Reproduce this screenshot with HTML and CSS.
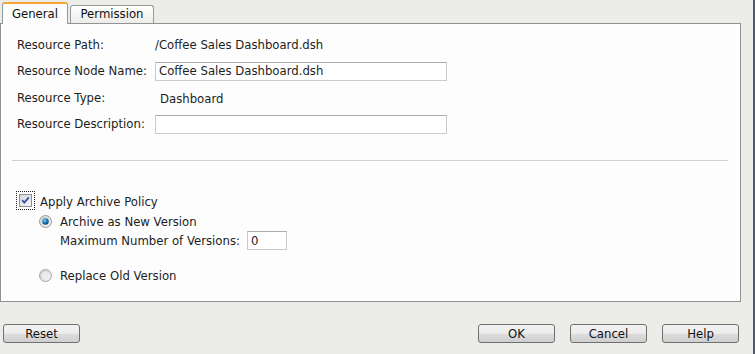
FILE: index.html
```html
<!DOCTYPE html>
<html lang="en">
<head>
    <meta charset="UTF-8">
    <title>Resource Properties</title>
    <link rel="stylesheet" href="styles.css">
</head>
<body>
    <!-- dialog body -->
    <div class="dialog">
        <div class="tabs">
            <div class="tab active">General</div>
            <div class="tab">Permission</div>
        </div>

        <div class="panel">
            <!-- resource info -->
            <div class="form">
                <span class="label">Resource Path:</span>
                <span class="value">/Coffee Sales Dashboard.dsh</span>

                <span class="label">Resource Node Name:</span>
                <input type="text" class="field" value="Coffee Sales Dashboard.dsh">

                <span class="label">Resource Type:</span>
                <span class="value type">Dashboard</span>

                <span class="label">Resource Description:</span>
                <input type="text" class="field" value="">
            </div>

            <div class="divider"></div>

            <!-- archive policy -->
            <div class="archive">
                <div class="check-row">
                    <span class="focus">
                        <svg width="13" height="13" viewBox="0 0 13 13">
                            <defs>
                                <linearGradient id="cb" x1="0" y1="0" x2="1" y2="1">
                                    <stop offset="0" stop-color="#d8d8d4"/>
                                    <stop offset="1" stop-color="#f4f4f2"/>
                                </linearGradient>
                            </defs>
                            <rect x="0.5" y="0.5" width="12" height="12" fill="url(#cb)" stroke="#8e9096"/>
                            <path d="M3.2 6.2 L5.3 8.6 L9.8 3.4" fill="none" stroke="#3650b8" stroke-width="1.8"/>
                        </svg>
                    </span>
                    <span class="check-text">Apply Archive Policy</span>
                </div>

                <div class="options">
                    <div class="radio-row">
                        <svg width="13" height="13" viewBox="0 0 13 13">
                            <defs>
                                <radialGradient id="rOn" cx="0.4" cy="0.35" r="0.6">
                                    <stop offset="0" stop-color="#8fd4f4"/>
                                    <stop offset="0.6" stop-color="#1a78b8"/>
                                    <stop offset="1" stop-color="#0c4a7c"/>
                                </radialGradient>
                                <linearGradient id="rBg" x1="0" y1="0" x2="1" y2="1">
                                    <stop offset="0" stop-color="#cfcfcf"/>
                                    <stop offset="1" stop-color="#f8f8f8"/>
                                </linearGradient>
                            </defs>
                            <circle cx="6.5" cy="6.5" r="6" fill="url(#rBg)" stroke="#9a9a9a"/>
                            <circle cx="6.5" cy="6.5" r="3.2" fill="url(#rOn)"/>
                        </svg>
                        <span>Archive as New Version</span>
                    </div>
                    <div class="sub-row">
                        <span>Maximum Number of Versions:</span>
                        <input type="text" class="small" value="0">
                    </div>
                    <div class="radio-row last">
                        <svg width="13" height="13" viewBox="0 0 13 13">
                            <defs>
                                <linearGradient id="rOff" x1="0" y1="0" x2="1" y2="1">
                                    <stop offset="0" stop-color="#c8c8c8"/>
                                    <stop offset="1" stop-color="#fafafa"/>
                                </linearGradient>
                            </defs>
                            <circle cx="6.5" cy="6.5" r="6" fill="url(#rOff)" stroke="#a4a4a4"/>
                            <circle cx="6.5" cy="6.5" r="3.6" fill="#ececec"/>
                        </svg>
                        <span>Replace Old Version</span>
                    </div>
                </div>
            </div>
        </div>

        <!-- bottom buttons -->
        <div class="footer">
            <button class="btn">Reset</button>
            <span class="spacer"></span>
            <button class="btn">OK</button>
            <button class="btn">Cancel</button>
            <button class="btn">Help</button>
        </div>
    </div>
</body>
</html>
```

FILE: styles.css
```css
/* page */
body {
    margin: 0;
    background-color: #ecece9;
    font-family: "DejaVu Sans", Verdana, sans-serif;
    font-size: 11.7px;
    color: #1e1e1e;
}

/* dialog frame, dark edge on the right */
.dialog {
    width: 753px;
    height: 354px;
    border-right: 2px solid #4d5b70;
    display: flex;
    flex-direction: column;
}

/* tab strip */
.tabs {
    height: 24px;
    padding-left: 2px;
    display: flex;
    align-items: flex-end;
    gap: 2px;
}

.tab {
    box-sizing: border-box;
    height: 19px;
    width: 84px;
    padding-top: 1px;
    text-align: center;
    border: 1px solid #919b9c;
    border-bottom: none;
    border-radius: 3px 3px 0 0;
    background: linear-gradient(#fefefe, #ecebe6);
    color: #111;
}

.tab.active {
    position: relative;
    z-index: 1;
    height: 22px;
    width: 66px;
    padding-top: 3px;
    border-top: 2px solid #f3a535;
    background: #fcfdfc;
}

/* main white panel */
.panel {
    box-sizing: border-box;
    width: 741px;
    height: 279px;
    margin-top: -1px;
    border: 1px solid #8f9394;
    background-color: #fcfdfc;
    padding-top: 12px;
}

.form {
    display: grid;
    grid-template-columns: 138px 292px;
    grid-template-rows: 18px 18px 19px 18px;
    row-gap: 8px;
    padding-left: 16px;
    align-items: center;
}

.value.type {
    padding-left: 5px;
    padding-top: 3px;
}

.field {
    box-sizing: border-box;
    width: 292px;
    height: 19px;
    margin: 0;
    padding: 0 3px;
    border: 1px solid #c9cccf;
    border-top-color: #a9adb2;
    background: #fff;
    font-family: inherit;
    font-size: 11.7px;
    color: #1e1e1e;
}

.divider {
    height: 1px;
    margin: 27px 12px 0 11px;
    background-color: #d2d2d0;
}

/* archive policy block */
.archive {
    padding: 30px 0 0 15px;
}

.check-row {
    display: flex;
    align-items: center;
    gap: 5px;
}

.check-text {
    padding-top: 2px;
}

.focus {
    display: flex;
    padding: 2px;
    border: 1px dotted #222;
}

.options {
    padding-left: 23px;
}

.radio-row {
    display: flex;
    align-items: center;
    gap: 8px;
    height: 19px;
    margin-top: 2px;
}

.radio-row.last {
    margin-top: 16px;
}

.sub-row {
    display: flex;
    align-items: center;
    gap: 7px;
    padding-left: 21px;
    height: 19px;
}

.small {
    box-sizing: border-box;
    width: 40px;
    height: 19px;
    margin: 0;
    padding: 0 3px;
    border: 1px solid #c9cccf;
    border-top-color: #a9adb2;
    background: #fff;
    font-family: inherit;
    font-size: 11.7px;
    color: #1e1e1e;
}

/* footer buttons */
.footer {
    display: flex;
    gap: 15px;
    padding: 22px 0 0 3px;
    width: 736px;
}

.spacer {
    flex: 1;
}

.btn {
    box-sizing: border-box;
    width: 77px;
    height: 19px;
    padding: 0;
    border: 1px solid #707070;
    border-radius: 3px;
    background: linear-gradient(#f3f3f3 0%, #ebebeb 50%, #dddddd 51%, #cfcfcf 100%);
    font-family: inherit;
    font-size: 11.7px;
    color: #111;
}
```
